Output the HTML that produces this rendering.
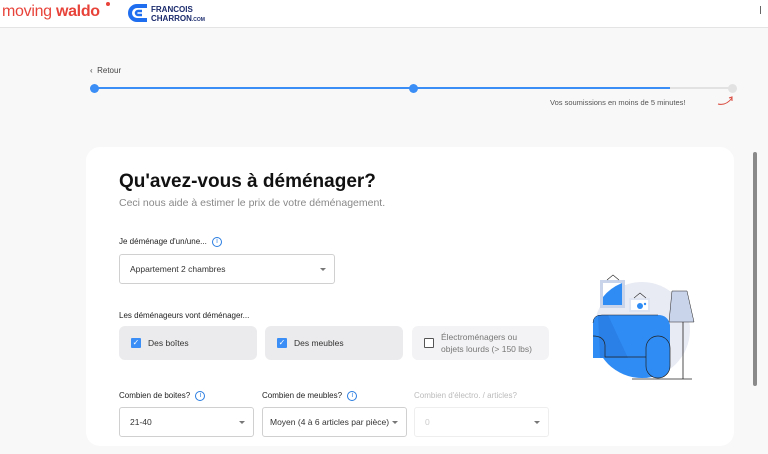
<!DOCTYPE html>
<html><head><meta charset="utf-8"><style>
*{box-sizing:border-box;margin:0;padding:0}
html,body{width:768px;height:454px;overflow:hidden}
body{background:#f8f8f8;font-family:"Liberation Sans",sans-serif;position:relative;color:#222}
.hdr{position:absolute;left:0;top:0;width:768px;height:28px;background:#fff;border-bottom:1px solid #e4e4e4}
.abs{position:absolute}
.card{position:absolute;left:86px;top:147px;width:648px;height:299px;background:#fff;border-radius:14px}
.lbl{position:absolute;font-size:8px;color:#222}
.sel{position:absolute;height:30px;border:1px solid #d0d0d0;border-radius:3px;background:#fff;font-size:8.5px;color:#333;padding:0 10px;line-height:28px}
.sel:after{content:"";position:absolute;right:8px;top:13px;border:3px solid transparent;border-top:3px solid #777}
.chk{position:absolute;height:34px;background:#ebebed;border-radius:6px;font-size:8.5px;color:#333}
.box{position:absolute;left:12px;top:12px;width:10px;height:10px;background:#3a8ef5;border-radius:1px;color:#fff;font-size:8px;line-height:10px;text-align:center}
.info{display:inline-block;width:10px;height:10px;border:1px solid #2a7de1;border-radius:50%;color:#2a7de1;font-size:7px;line-height:8px;text-align:center;vertical-align:middle;margin-left:3px}
</style></head><body>
<div class="hdr">
 <div class="abs" style="left:2px;top:3px;font-size:16px;color:#e8433a;letter-spacing:-0.3px">moving <b style="font-weight:bold">waldo</b></div>
 <div class="abs" style="left:106px;top:2px;width:4px;height:4px;border-radius:50%;background:#e8433a"></div>
 <svg class="abs" style="left:128px;top:3px" width="22" height="20" viewBox="0 0 22 20"><path d="M19 3 H9 A7 7 0 0 0 9 17 H19" fill="none" stroke="#1f6ef0" stroke-width="4"/><path d="M14 8 H10 A2 2 0 0 0 10 12 H14" fill="none" stroke="#1f6ef0" stroke-width="2.5"/></svg>
 <div class="abs" style="left:151px;top:5px;font-size:8px;font-weight:bold;color:#1a2a6c;line-height:9px">FRANCOIS<br>CHARRON<span style="font-size:5px">.COM</span></div>
</div>
<div class="abs" style="left:90px;top:66px;font-size:8px;color:#444">‹ &nbsp;Retour</div>
<div class="abs" style="left:94px;top:87px;width:639px;height:2px;background:#e2e2e2"></div>
<div class="abs" style="left:94px;top:87px;width:576px;height:2px;background:#3a8ef5"></div>
<div class="abs" style="left:90px;top:84px;width:9px;height:9px;border-radius:50%;background:#3a8ef5"></div>
<div class="abs" style="left:409px;top:84px;width:9px;height:9px;border-radius:50%;background:#3a8ef5"></div>
<div class="abs" style="left:728px;top:84px;width:9px;height:9px;border-radius:50%;background:#e2e2e2"></div>
<div class="abs" style="left:550px;top:98px;font-size:7.5px;color:#555">Vos soumissions en moins de 5 minutes!</div>
<svg class="abs" style="left:716px;top:95px" width="20" height="12"><path d="M2 9 Q10 11 16 3 M13 3 L16 2 L16 6" fill="none" stroke="#d9473b" stroke-width="1"/></svg>
<div class="card">
 <div class="abs" style="left:33px;top:24px;font-size:19px;font-weight:bold;color:#111">Qu'avez-vous à déménager?</div>
 <div class="abs" style="left:33px;top:50px;font-size:10.5px;color:#888">Ceci nous aide à estimer le prix de votre déménagement.</div>
 <div class="lbl" style="left:33px;top:90px">Je déménage d'un/une... <span class="info">i</span></div>
 <div class="sel" style="left:33px;top:107px;width:216px">Appartement 2 chambres</div>
 <div class="lbl" style="left:33px;top:164px">Les déménageurs vont déménager...</div>
 <div class="chk" style="left:33px;top:179px;width:138px"><div class="box">✓</div><span class="abs" style="left:29px;top:12px">Des boîtes</span></div>
 <div class="chk" style="left:179px;top:179px;width:138px"><div class="box">✓</div><span class="abs" style="left:29px;top:12px">Des meubles</span></div>
 <div class="chk" style="left:326px;top:179px;width:137px;background:#f3f3f5"><div class="box" style="background:#fff;border:1px solid #555"></div><span class="abs" style="left:29px;top:5px;color:#777;line-height:12px">Électroménagers ou<br>objets lourds (&gt; 150 lbs)</span></div>
 <div class="lbl" style="left:33px;top:244px">Combien de boites? <span class="info">i</span></div>
 <div class="lbl" style="left:176px;top:244px">Combien de meubles? <span class="info">i</span></div>
 <div class="lbl" style="left:328px;top:244px;color:#bbb">Combien d'électro. / articles?</div>
 <div class="sel" style="left:33px;top:260px;width:135px">21-40</div>
 <div class="sel" style="left:176px;top:260px;width:145px;padding:0 7px">Moyen (4 à 6 articles par pièce)</div>
 <div class="sel" style="left:328px;top:260px;width:135px;border-color:#eee;color:#ccc">0</div>
</div>
<svg class="abs" style="left:560px;top:260px" width="140" height="125" viewBox="0 0 140 125">
 <defs><clipPath id="c"><circle cx="82" cy="70" r="48"/></clipPath></defs>
 <circle cx="82" cy="70" r="48" fill="#e9ebf4"/>
 <rect x="30" y="95" width="80" height="30" fill="#2f8cf5" clip-path="url(#c)"/>
 <path d="M33 98 L33 63 Q33 55 42 55 L98 55 Q108 55 110 65 L110 98Z" fill="#2f8cf5"/>
 <path d="M38 55 L48 55 L68 98 L40 98 Z" fill="#2a80e6"/>
 <path d="M33 76 Q44 76 45 85 L45 97 L88 97" fill="none" stroke="#222" stroke-width="0.7"/>
 <path d="M33 63 Q33 55 42 55 L98 55" fill="none" stroke="#222" stroke-width="0.5"/>
 <rect x="86" y="76" width="24" height="42" rx="12" fill="#2f8cf5" stroke="#222" stroke-width="0.7"/>
 <rect x="40" y="20" width="25" height="28" fill="#c9d3ea"/><rect x="43" y="23" width="19" height="22" fill="#fff"/><path d="M43 45 L43 37 Q50 28 62 23 L62 45Z" fill="#2f8cf5"/>
 <path d="M47 20 L53 15 L59 20" fill="none" stroke="#222" stroke-width="0.6"/>
 <rect x="69" y="38" width="21" height="14" fill="#dfe4f2"/><rect x="71" y="40" width="17" height="10" fill="#fff"/><circle cx="80" cy="46" r="3" fill="#2f8cf5"/><circle cx="85" cy="44" r="1.2" fill="#2f8cf5"/>
 <path d="M74 38 L80 33 L86 38" fill="none" stroke="#222" stroke-width="0.6"/>
 <path d="M112 31 L127 31 L134 62 L109 62Z" fill="#c9d3ea" stroke="#222" stroke-width="0.5"/>
 <line x1="123" y1="62" x2="123" y2="119" stroke="#222" stroke-width="0.8"/>
 <line x1="72" y1="119" x2="132" y2="119" stroke="#222" stroke-width="0.8"/>
</svg>
<div class="abs" style="left:753px;top:152px;width:4px;height:234px;background:#8a8a8a;border-radius:2px"></div>
<div class="abs" style="left:760px;top:6px;width:1px;height:8px;background:#666"></div>
</body></html>
